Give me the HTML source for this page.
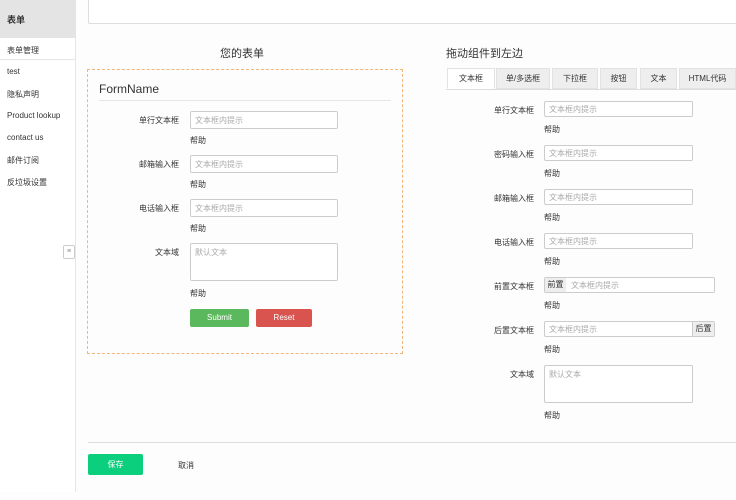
<!DOCTYPE html>
<html><head><meta charset="utf-8"><style>
*{margin:0;padding:0;box-sizing:border-box}
body{width:736px;height:500px;background:#fdfdfd;font-family:"Liberation Sans","Noto Sans CJK SC",sans-serif;font-size:9px;color:#333;position:relative;overflow:hidden}
.a{position:absolute}
.side{left:0;top:0;width:76px;height:492px;border-right:1px solid #e6e6e6;background:#fff}
.sh{left:0;top:0;width:76px;height:38px;background:#e4e4e4;font-size:9px;font-weight:bold;padding:13px 7px}
.si{left:7px;font-size:8px;color:#333}
.inp{border:1px solid #ccc;border-radius:2px;background:#fff;color:#aaa;font-size:8px;padding:4px 4px;line-height:10px}
.lb{text-align:right;width:90px;font-size:8px}
.hp{font-size:8px}
.tab{top:68px;height:21px;background:#eee;border:1px solid #e2e2e2;font-size:8px;text-align:center;line-height:19px}
.add{background:#eee;color:#333;font-size:8px;line-height:14px;text-align:center}
</style></head><body>
<div class="a side"></div>
<div class="a sh">表单</div>
<div class="a" style="left:0;top:59px;width:76px;border-top:1px solid #e6e6e6"></div>
<div class="a si" style="top:45px">表单管理</div>
<div class="a si" style="top:67px">test</div>
<div class="a si" style="top:89px">隐私声明</div>
<div class="a si" style="top:111px">Product lookup</div>
<div class="a si" style="top:133px">contact us</div>
<div class="a si" style="top:155px">邮件订阅</div>
<div class="a si" style="top:177px">反垃圾设置</div>
<div class="a" style="left:63px;top:245px;width:12px;height:14px;border:1px solid #ccc;border-radius:2px;background:#fff;font-size:7px;color:#888;text-align:center;line-height:12px">≡</div>

<div class="a" style="left:88px;top:-2px;width:660px;height:26px;border:1px solid #ddd;border-radius:2px;background:#fff"></div>

<div class="a" style="left:200px;top:45px;width:84px;text-align:center;font-size:11px">您的表单</div>
<div class="a" style="left:446px;top:45px;font-size:11px">拖动组件到左边</div>

<div class="a" style="left:87px;top:69px;width:316px;height:285px;border:1px dashed #f4b57a"></div>
<div class="a" style="left:99px;top:82px;font-size:12px">FormName</div>
<div class="a" style="left:99px;top:100px;width:292px;border-top:1px solid #e5e5e5"></div>

<div class="a lb" style="left:89px;top:115px">单行文本框</div>
<div class="a inp" style="left:190px;top:111px;width:148px;height:18px">文本框内提示</div>
<div class="a hp" style="left:190px;top:135px">帮助</div>
<div class="a lb" style="left:89px;top:159px">邮箱输入框</div>
<div class="a inp" style="left:190px;top:155px;width:148px;height:18px">文本框内提示</div>
<div class="a hp" style="left:190px;top:179px">帮助</div>
<div class="a lb" style="left:89px;top:203px">电话输入框</div>
<div class="a inp" style="left:190px;top:199px;width:148px;height:18px">文本框内提示</div>
<div class="a hp" style="left:190px;top:223px">帮助</div>
<div class="a lb" style="left:89px;top:247px">文本域</div>
<div class="a inp" style="left:190px;top:243px;width:148px;height:38px">默认文本</div>
<div class="a hp" style="left:190px;top:288px">帮助</div>
<div class="a" style="left:190px;top:309px;width:59px;height:18px;background:#5cb85c;border-radius:2px;color:#fff;text-align:center;line-height:18px;font-size:8px">Submit</div>
<div class="a" style="left:256px;top:309px;width:56px;height:18px;background:#d9534f;border-radius:2px;color:#fff;text-align:center;line-height:18px;font-size:8px">Reset</div>

<div class="a" style="left:446px;top:89px;width:290px;border-top:1px solid #ddd"></div>
<div class="a tab" style="left:447px;width:48px;background:#fff;border-bottom-color:#fff">文本框</div>
<div class="a tab" style="left:496px;width:54px">单/多选框</div>
<div class="a tab" style="left:552px;width:46px">下拉框</div>
<div class="a tab" style="left:600px;width:37px">按钮</div>
<div class="a tab" style="left:640px;width:37px">文本</div>
<div class="a tab" style="left:679px;width:57px">HTML代码</div>

<div class="a lb" style="left:444px;top:105px">单行文本框</div>
<div class="a inp" style="left:544px;top:101px;width:149px;height:16px;padding:3px 4px">文本框内提示</div>
<div class="a hp" style="left:544px;top:124px">帮助</div>
<div class="a lb" style="left:444px;top:149px">密码输入框</div>
<div class="a inp" style="left:544px;top:145px;width:149px;height:16px;padding:3px 4px">文本框内提示</div>
<div class="a hp" style="left:544px;top:168px">帮助</div>
<div class="a lb" style="left:444px;top:193px">邮箱输入框</div>
<div class="a inp" style="left:544px;top:189px;width:149px;height:16px;padding:3px 4px">文本框内提示</div>
<div class="a hp" style="left:544px;top:212px">帮助</div>
<div class="a lb" style="left:444px;top:237px">电话输入框</div>
<div class="a inp" style="left:544px;top:233px;width:149px;height:16px;padding:3px 4px">文本框内提示</div>
<div class="a hp" style="left:544px;top:256px">帮助</div>
<div class="a lb" style="left:444px;top:281px">前置文本框</div>
<div class="a inp" style="left:544px;top:277px;width:171px;height:16px;padding:3px 4px 2px 26px">文本框内提示</div>
<div class="a add" style="left:545px;top:278px;width:21px;height:14px">前置</div>
<div class="a hp" style="left:544px;top:300px">帮助</div>
<div class="a lb" style="left:444px;top:325px">后置文本框</div>
<div class="a inp" style="left:544px;top:321px;width:171px;height:16px;padding:3px 4px">文本框内提示</div>
<div class="a add" style="left:692px;top:322px;width:22px;height:14px;border-left:1px solid #ccc">后置</div>
<div class="a hp" style="left:544px;top:344px">帮助</div>
<div class="a lb" style="left:444px;top:369px">文本域</div>
<div class="a inp" style="left:544px;top:365px;width:149px;height:38px">默认文本</div>
<div class="a hp" style="left:544px;top:410px">帮助</div>

<div class="a" style="left:88px;top:442px;width:648px;border-top:1px solid #ddd"></div>
<div class="a" style="left:88px;top:454px;width:55px;height:21px;background:#0ccf7e;border-radius:2px;color:#fff;text-align:center;line-height:21px;font-size:8px">保存</div>
<div class="a" style="left:178px;top:460px;font-size:8px">取消</div>
</body></html>
